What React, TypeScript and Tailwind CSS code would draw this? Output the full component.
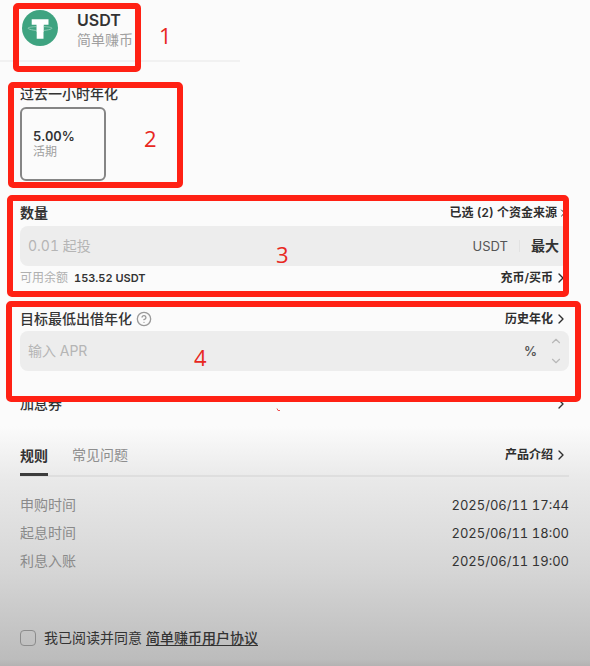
import type { ReactNode } from 'react';
import { ChevronDown, ChevronRight, ChevronUp, CircleHelp } from 'lucide-react';

interface CalloutProps {
  label: string;
  box: string;
  labelPosition: string;
}

// Red frame with a step number, laid over the section it explains
function Callout({ label, box, labelPosition }: CalloutProps) {
  return (
    <div className={`pointer-events-none absolute rounded-[5px] border-6 border-[#ff2114] ${box}`}>
      <span
        className={`absolute font-['Open_Sans',sans-serif] text-[22px] leading-6 text-[#e8281e] ${labelPosition}`}
      >
        {label}
      </span>
    </div>
  );
}

function LinkButton({ children, iconClass = 'size-4' }: { children: ReactNode; iconClass?: string }) {
  return (
    <a href="#" className="flex items-center text-xs leading-5 font-semibold text-[#2e2e2e]">
      {children}
      <ChevronRight className={iconClass} strokeWidth={2} />
    </a>
  );
}

function TetherLogo() {
  return (
    <svg className="size-9" viewBox="0 0 36 36" aria-hidden="true">
      <circle cx="18" cy="18" r="18" fill="#3ea380" />
      <path d="M9.700 9.300h16.800v5.400h-5v14h-6.800v-14h-5z" fill="#fff" />
      <path
        d="M14.700 16.600c-5 .2-8.700.8-8.700 1.600s5 2.400 12 2.400 12-1.600 12-2.400-3.700-1.400-8.700-1.600"
        fill="none"
        stroke="#8fcab5"
        strokeWidth="1"
      />
      <path d="M14.700 14h6.800v8h-6.800z" fill="#fff" />
    </svg>
  );
}

const rules = [
  { label: '申购时间', value: '2025/06/11 17:44' },
  { label: '起息时间', value: '2025/06/11 18:00' },
  { label: '利息入账', value: '2025/06/11 19:00' },
];

export default function App() {
  return (
    <main className="flex min-h-screen flex-col overflow-x-hidden bg-[linear-gradient(to_bottom,#fbfbfb_0%,#fbfbfb_64%,#e9e9e9_72%,#d5d5d5_86%,#bcbcbc_99%,#b4b2b2_100%)] font-[Inter,'Noto_Sans_CJK_SC',sans-serif] text-sm leading-5 text-[#333333] tabular-nums">
      <header className="relative pt-2.5">
        <div className="flex gap-[19px] pb-2.5 pl-[22px]">
          <TetherLogo />
          <div>
            <h1 className="text-base leading-5 font-semibold">USDT</h1>
            <p className="text-[#a0a0a0]">简单赚币</p>
          </div>
        </div>
        <div className="h-0.5 w-60 bg-[#f1f1f1]" />
        <Callout label="1" box="left-[13px] top-[3px] h-[69px] w-32" labelPosition="left-[140px] top-3.5" />
      </header>

      <section className="relative mt-[22px] pr-[21px] pl-5">
        <h2 className="font-medium">过去一小时年化</h2>
        <button
          type="button"
          className="mt-[3px] flex h-[74px] w-[86px] flex-col justify-center rounded-md border-2 border-[#858585] pl-[11px] text-left leading-4"
        >
          <span className="text-[13px] font-semibold">5.00%</span>
          <span className="text-xs leading-4 text-[#a0a0a0]">活期</span>
        </button>
        <Callout label="2" box="left-2 -top-0.5 -bottom-[7px] w-[175px]" labelPosition="left-[130px] top-[38px]" />
      </section>

      <section className="relative mt-[22px] pr-[21px] pl-5">
        <div className="flex justify-between">
          <label htmlFor="amount" className="font-bold">
            数量
          </label>
          <LinkButton iconClass="size-3">已选 (2) 个资金来源</LinkButton>
        </div>
        <div className="mt-[3px] flex h-10 items-center rounded-lg bg-[#ededed] pr-2.5 pl-2">
          <input
            id="amount"
            type="text"
            placeholder="0.01 起投"
            className="min-w-0 flex-1 bg-transparent outline-none placeholder:text-[#b5b5b5]"
          />
          <span className="text-[13px] text-[#555555]">USDT</span>
          <span className="mx-[11px] h-3 w-px bg-[#e2e2e2]" />
          <button type="button" className="font-bold">
            最大
          </button>
        </div>
        <div className="mt-0.5 flex justify-between text-xs leading-5">
          <p className="flex gap-1.5">
            <span className="text-[#b0b0b0]">可用余额</span>
            <span className="text-[11px] font-semibold">153.52 USDT</span>
          </p>
          <LinkButton>充币/买币</LinkButton>
        </div>
        <Callout
          label="3"
          box="right-[21px] -top-2 -bottom-[9px] left-[7px]"
          labelPosition="left-[263px] top-[41px]"
        />
      </section>

      <section className="relative mt-[21px] pr-[21px] pl-5">
        <div className="flex justify-between">
          <div className="flex items-center gap-1">
            <label htmlFor="apr" className="font-medium">
              目标最低出借年化
            </label>
            <CircleHelp className="size-4 text-[#9a9a9a]" strokeWidth={2} />
          </div>
          <LinkButton>历史年化</LinkButton>
        </div>
        <div className="mt-0.5 flex h-10 items-center rounded-lg bg-[#ededed] pr-1.5 pl-2">
          <input
            id="apr"
            type="text"
            placeholder="输入 APR"
            className="min-w-0 flex-1 bg-transparent outline-none placeholder:text-[#b5b5b5]"
          />
          <span className="mr-3 text-[13px] font-semibold text-[#555555]">%</span>
          <div className="flex flex-col gap-1.5 text-[#b8b8b8]">
            <button type="button" aria-label="增加">
              <ChevronUp className="size-3.5" strokeWidth={2} />
            </button>
            <button type="button" aria-label="减少">
              <ChevronDown className="size-3.5" strokeWidth={2} />
            </button>
          </div>
        </div>
        <Callout
          label="4"
          box="right-[9px] -top-2 -bottom-[31px] left-1.5"
          labelPosition="left-[182px] top-[38px]"
        />
      </section>

      <section className="mt-[23px] flex items-center justify-between pr-[21px] pl-5">
        <h2 className="font-medium">加息券</h2>
        <svg className="mt-3 mr-auto ml-[214px] h-1 w-1.5" viewBox="0 0 6 4" aria-hidden="true">
          <path d="M1 0.500l1 2h2" fill="none" stroke="#f05050" strokeWidth="1" />
        </svg>
        <a href="#" aria-label="加息券">
          <ChevronRight className="size-4" strokeWidth={2} />
        </a>
      </section>

      <section className="mt-[31px] pr-[21px] pl-5">
        <div className="flex items-start justify-between border-b-2 border-[#dedede]">
          <div className="flex gap-6">
            <button type="button" className="-mb-px border-b-3 border-[#3c3c3c] pb-[7px] font-bold">
              规则
            </button>
            <button type="button" className="pb-2.5 text-[#8e8e8e]">
              常见问题
            </button>
          </div>
          <LinkButton>产品介绍</LinkButton>
        </div>
        <dl className="pt-3.5 leading-7">
          {rules.map((rule) => (
            <div key={rule.label} className="flex justify-between">
              <dt className="text-[#8a8a8a]">{rule.label}</dt>
              <dd className="text-[13px]">{rule.value}</dd>
            </div>
          ))}
        </dl>
      </section>

      <footer className="mt-auto flex items-center gap-1 pt-8 pr-[21px] pb-[18px] pl-5">
        <input
          id="agree"
          type="checkbox"
          className="mr-1 size-4 appearance-none rounded-[4px] border border-[#8c8c8c] checked:bg-[#3c3c3c]"
        />
        <label htmlFor="agree">我已阅读并同意</label>
        <a href="#" className="font-medium underline underline-offset-2">
          简单赚币用户协议
        </a>
      </footer>
    </main>
  );
}
